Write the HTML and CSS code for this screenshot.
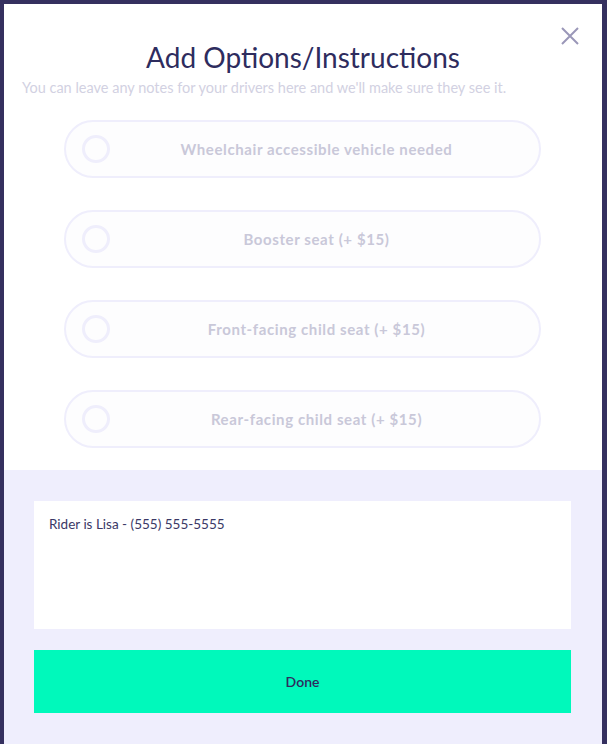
FILE: index.html
```html
<!DOCTYPE html>
<html>
<head>
<meta charset="utf-8">
<link rel="stylesheet" href="styles.css">
</head>
<body>
<div class="modal">
  <button class="close" aria-label="Close">
    <svg width="18" height="18" viewBox="0 0 18 18"><path d="M1 1L17 17M17 1L1 17" stroke="#9a97b8" stroke-width="2" fill="none"/></svg>
  </button>
  <div class="top">
    <h1 class="title">Add Options/Instructions</h1>
    <p class="subtitle">You can leave any notes for your drivers here and we'll make sure they see it.</p>
    <div class="options">
      <div class="option"><span class="radio"></span><span class="label">Wheelchair accessible vehicle needed</span></div>
      <div class="option"><span class="radio"></span><span class="label">Booster seat (+ $15)</span></div>
      <div class="option"><span class="radio"></span><span class="label">Front-facing child seat (+ $15)</span></div>
      <div class="option"><span class="radio"></span><span class="label">Rear-facing child seat (+ $15)</span></div>
    </div>
  </div>
  <div class="bottom">
    <div class="notes">Rider is Lisa - (555) 555-5555</div>
    <button class="done">Done</button>
  </div>
</div>
</body>
</html>
```

FILE: styles.css
```css
html, body {
  margin: 0;
  height: 100%;
}
body {
  background: #35305f;
  padding: 4px 5px 0 4px;
  box-sizing: border-box;
  font-family: Lato, "Noto Sans", sans-serif;
  overflow: hidden;
}
.modal {
  position: relative;
  background: #ffffff;
  height: 740px;
  display: flex;
  flex-direction: column;
}
.close {
  position: absolute;
  top: 23px;
  right: 23px;
  width: 18px;
  height: 18px;
  padding: 0;
  border: 0;
  background: none;
}
.close svg { display: block; }
.top {
  height: 466px;
  display: flex;
  flex-direction: column;
}
.title {
  margin: 37px 0 0;
  text-align: center;
  font-size: 28px;
  font-weight: 400;
  color: #2e2c5e;
  line-height: 32px;
}
.subtitle {
  margin: 5px 0 0 18px;
  font-size: 14.5px;
  color: #d2d1e2;
  line-height: 20px;
}
.options {
  margin: 22px 0 0 60px;
  width: 477px;
  display: flex;
  flex-direction: column;
  gap: 32px;
}
.option {
  height: 58px;
  box-sizing: border-box;
  border: 2px solid #efeefc;
  border-radius: 29px;
  background: #fdfdfe;
  display: flex;
  align-items: center;
  padding: 0 16px;
}
.radio {
  width: 28px;
  height: 28px;
  box-sizing: border-box;
  border: 3px solid #efeefc;
  border-radius: 50%;
  flex: none;
}
.label {
  flex: 1;
  text-align: center;
  font-size: 15px;
  font-weight: 700;
  letter-spacing: 0.6px;
  color: #c9c8d9;
}
.bottom {
  flex: 1;
  background: #efeefd;
  padding: 31px 31px 0 30px;
  display: flex;
  flex-direction: column;
}
.notes {
  background: #ffffff;
  height: 128px;
  box-sizing: border-box;
  padding: 14px 15px;
  font-size: 13.5px;
  color: #3a3866;
  line-height: 18px;
}
.done {
  margin-top: 21px;
  height: 63px;
  border: 0;
  background: #00f9bb;
  font-family: inherit;
  font-size: 14px;
  font-weight: 600;
  color: #2e2c5e;
}
```
